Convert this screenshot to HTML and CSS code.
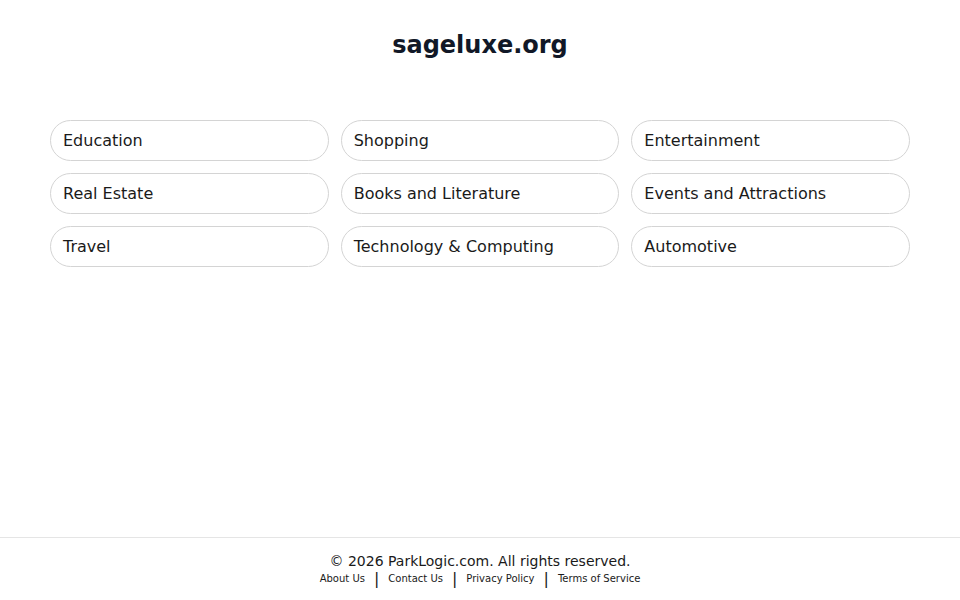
FILE: index.html
```html
<!DOCTYPE html>
<html>
<head>
<meta charset="utf-8">
<link rel="stylesheet" href="styles.css">
</head>
<body>
<main class="main">
  <h1 class="title">sageluxe.org</h1>
  <div class="grid">
    <a class="pill" href="#">Education</a>
    <a class="pill" href="#">Shopping</a>
    <a class="pill" href="#">Entertainment</a>
    <a class="pill" href="#">Real Estate</a>
    <a class="pill" href="#">Books and Literature</a>
    <a class="pill" href="#">Events and Attractions</a>
    <a class="pill" href="#">Travel</a>
    <a class="pill" href="#">Technology &amp; Computing</a>
    <a class="pill" href="#">Automotive</a>
  </div>
</main>
<footer class="footer">
  <div class="copy">© 2026 ParkLogic.com. All rights reserved.</div>
  <div class="links">
    <a href="#">About Us</a><span class="sep">|</span><a href="#">Contact Us</a><span class="sep">|</span><a href="#">Privacy Policy</a><span class="sep">|</span><a href="#">Terms of Service</a>
  </div>
</footer>
</body>
</html>
```
FILE: styles.css
```css
html, body {
  margin: 0;
  padding: 0;
}
body {
  font-family: "DejaVu Sans", sans-serif;
  color: #1a1a1a;
  background: #fff;
  min-height: 100vh;
  display: flex;
  flex-direction: column;
}
.main {
  flex: 1;
  padding: 0 50px;
}
.title {
  margin: 31px 0 0;
  font-size: 24px;
  line-height: 28px;
  font-weight: bold;
  text-align: center;
  color: #111827;
}
.grid {
  margin-top: 61px;
  display: grid;
  grid-template-columns: repeat(3, 1fr);
  column-gap: 12px;
  row-gap: 12px;
}
.pill {
  display: flex;
  align-items: center;
  height: 41px;
  box-sizing: border-box;
  padding: 0 12px;
  border: 1px solid #d4d4d4;
  border-radius: 21px;
  font-size: 16px;
  color: #1a1a1a;
  text-decoration: none;
}
.footer {
  border-top: 1px solid #e5e5e5;
  padding: 15px 0 13px;
  text-align: center;
}
.copy {
  font-size: 14px;
  line-height: 17px;
  color: #1a1a1a;
}
.links {
  font-size: 10px;
  line-height: 16px;
  display: flex;
  justify-content: center;
  align-items: center;
  padding-top: 1px;
}
.links a {
  color: #1a1a1a;
  text-decoration: none;
}
.sep {
  font-size: 16px;
  margin: 0 9px;
  color: #1a1a1a;
}
```
